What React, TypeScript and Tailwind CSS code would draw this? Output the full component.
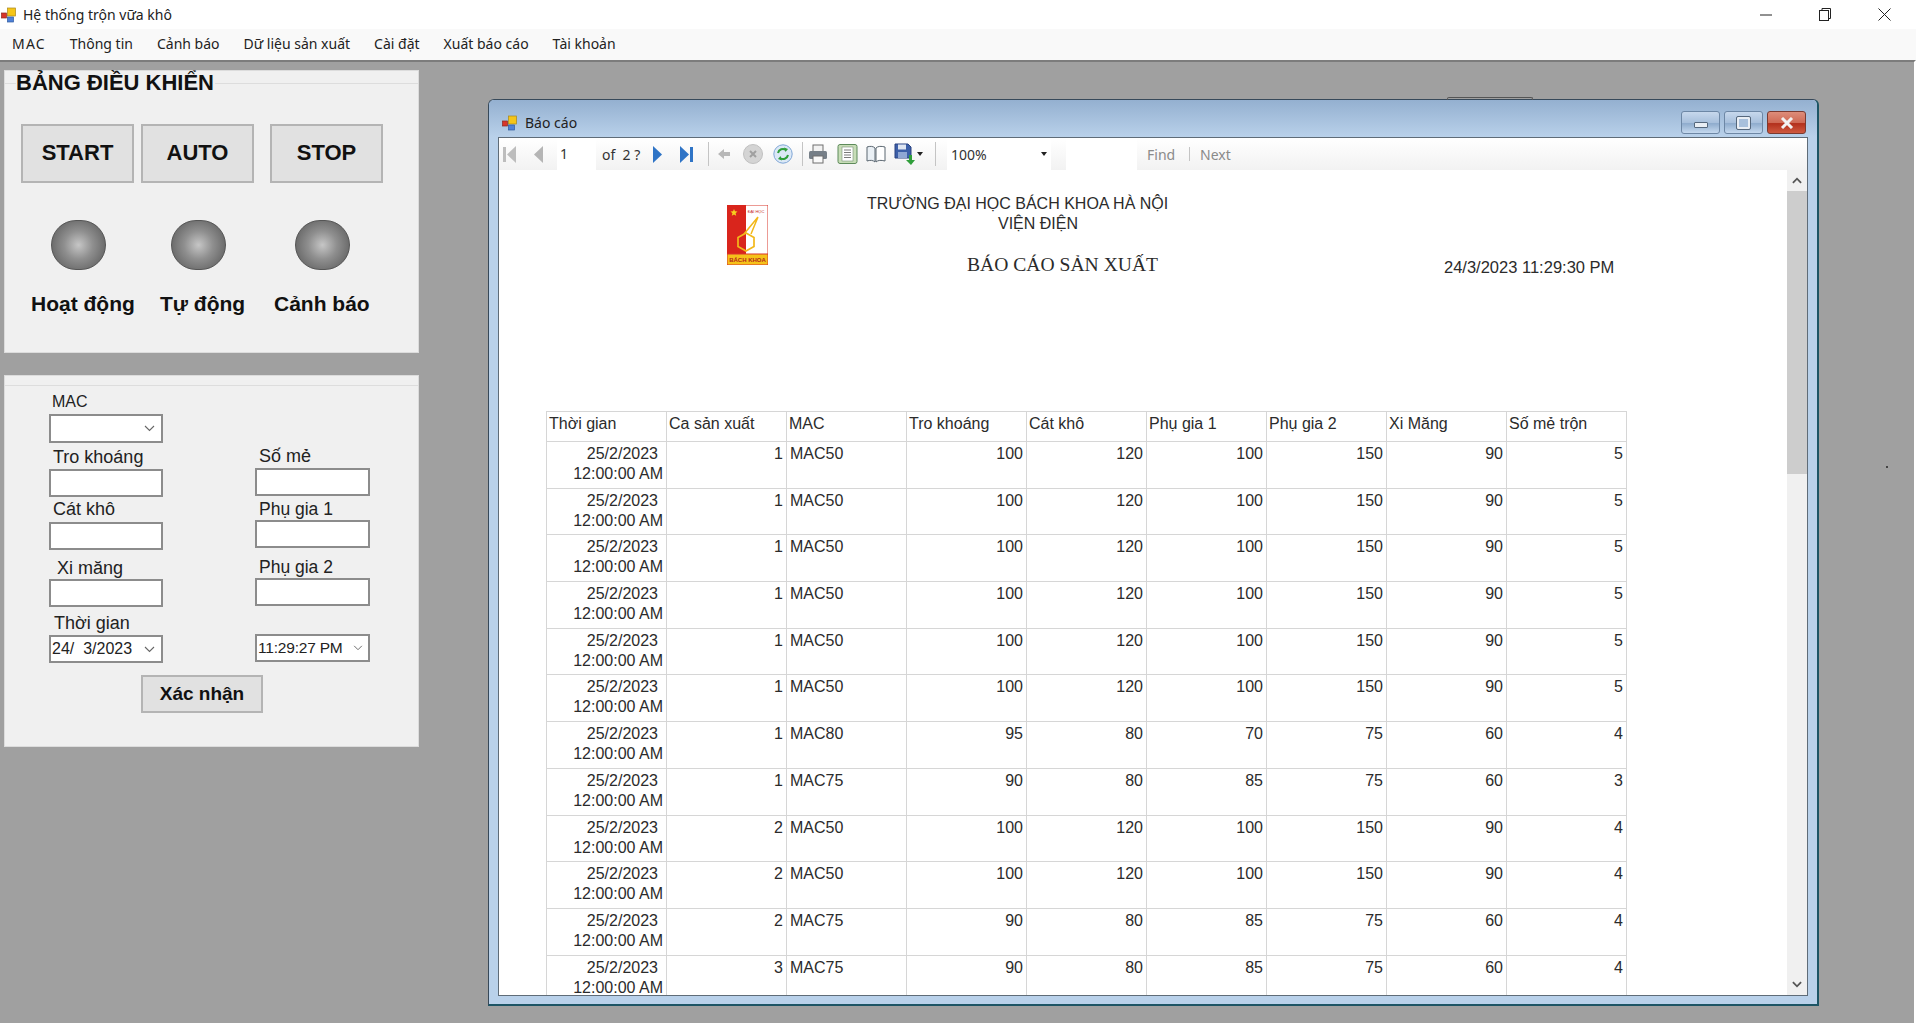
import React from "react";

const rows = [
  ["1", "MAC50", "100", "120", "100", "150", "90", "5"],
  ["1", "MAC50", "100", "120", "100", "150", "90", "5"],
  ["1", "MAC50", "100", "120", "100", "150", "90", "5"],
  ["1", "MAC50", "100", "120", "100", "150", "90", "5"],
  ["1", "MAC50", "100", "120", "100", "150", "90", "5"],
  ["1", "MAC50", "100", "120", "100", "150", "90", "5"],
  ["1", "MAC80", "95", "80", "70", "75", "60", "4"],
  ["1", "MAC75", "90", "80", "85", "75", "60", "3"],
  ["2", "MAC50", "100", "120", "100", "150", "90", "4"],
  ["2", "MAC50", "100", "120", "100", "150", "90", "4"],
  ["2", "MAC75", "90", "80", "85", "75", "60", "4"],
  ["3", "MAC75", "90", "80", "85", "75", "60", "4"],
];

const headers = ["Thời gian", "Ca sản xuất", "MAC", "Tro khoáng", "Cát khô", "Phụ gia 1", "Phụ gia 2", "Xi Măng", "Số mẻ trộn"];
const menus = ["MAC", "Thông tin", "Cảnh báo", "Dữ liệu sản xuất", "Cài đặt", "Xuất báo cáo", "Tài khoản"];

const AppIcon = ({ className }: { className: string }) => (
  <svg viewBox="0 0 16 16" className={className}>
    <rect x="7" y="1" width="8" height="8" fill="#f5c518" stroke="#a8861a" strokeWidth="0.7" />
    <rect x="1" y="6" width="5" height="5" fill="#d8352a" stroke="#8c2a20" strokeWidth="0.7" />
    <rect x="7" y="10" width="6" height="5" fill="#4f81d8" stroke="#2e5a9e" strokeWidth="0.7" />
  </svg>
);

const Chevron = ({ className = "w-[11px] h-[7px]" }: { className?: string }) => (
  <svg viewBox="0 0 11 7" className={className} fill="none" stroke="#666" strokeWidth="1.1">
    <path d="M1 1l4.5 4.5L10 1" />
  </svg>
);

const Led = ({ className }: { className: string }) => (
  <div className={`w-[55px] h-[50px] rounded-full border border-[#555] bg-[radial-gradient(circle,#c6c6c6_0%,#8f8f8f_40%,#6c6c6c_75%)] ${className}`} />
);

const BigButton = ({ label, className }: { label: string; className: string }) => (
  <button className={`w-[113px] h-[59px] pb-[2px] bg-[#e1e1e1] border-2 border-[#b4b4b4] text-[22px] font-bold text-[#111] ${className}`}>
    {label}
  </button>
);

const boxClass = "w-[114px] bg-white border-2 border-[#8c8c8c] block";

const Field = ({ label, className, labelClass, boxH, children }: { label?: string; className: string; labelClass?: string; boxH: string; children?: React.ReactNode }) => (
  <div className={className}>
    {label && <div className={`h-5 leading-5 text-[#222] ${labelClass}`}>{label}</div>}
    <div className={`${boxClass} ${boxH} flex items-center justify-between text-[#222]`}>{children}</div>
  </div>
);

const Sep = ({ className }: { className: string }) => <div className={`w-px h-[24px] bg-[#c4c4c4] ${className}`} />;

const Toolbar = () => (
  <div className="h-8 flex items-center bg-gradient-to-b from-white to-[#f2f2f2] font-['Noto_Sans',sans-serif] text-[14px] text-[#333]">
    <svg viewBox="0 0 13 17" className="w-[13px] h-[17px] ml-[4px]"><rect x="0" y="1" width="3" height="15" fill="#bdbdbd" /><path d="M13 0v17L4 8.5z" fill="#bdbdbd" /></svg>
    <svg viewBox="0 0 9 17" className="w-[9px] h-[17px] ml-[18px]"><path d="M9 0v17L0 8.5z" fill="#b5b5b5" /></svg>
    <div className="w-[39px] h-8 ml-[14px] bg-white pl-[3px] leading-8">1</div>
    <div className="w-[51px] ml-[6px] whitespace-pre">of  2 ?</div>
    <svg viewBox="0 0 9 17" className="w-[9px] h-[17px]"><path d="M0 0v17l9-8.5z" fill="#2f74c6" /></svg>
    <svg viewBox="0 0 13 17" className="w-[13px] h-[17px] ml-[18px]"><path d="M0 0v17l9-8.5z" fill="#2f74c6" /><rect x="10" y="1" width="3" height="15" fill="#2f74c6" /></svg>
    <Sep className="ml-[15px]" />
    <svg viewBox="0 0 12 10" className="w-[12px] h-[10px] ml-[9px]"><path d="M0 5l6-5v3h6v4H6v3z" fill="#b8b8b8" /></svg>
    <svg viewBox="0 0 20 20" className="w-5 h-5 ml-[13px]"><circle cx="10" cy="10" r="9.5" fill="#d4d4d4" stroke="#c0c0c0" /><path d="M7 7l6 6M13 7l-6 6" stroke="#a0a0a0" strokeWidth="2" /></svg>
    <svg viewBox="0 0 20 20" className="w-5 h-5 ml-[10px]" fill="none">
      <circle cx="10" cy="10" r="9.2" fill="#dbe8f6" stroke="#7fa6d6" />
      <path d="M5 9a5 5 0 0 1 8-3" stroke="#2f9e3a" strokeWidth="2" />
      <path d="M11 3.5l4 1.5-2.5 3z" fill="#2f9e3a" />
      <path d="M15 11a5 5 0 0 1-8 3" stroke="#2f9e3a" strokeWidth="2" />
      <path d="M9 16.5l-4-1.5 2.5-3z" fill="#2f9e3a" />
    </svg>
    <Sep className="ml-[9px]" />
    <svg viewBox="0 0 20 20" className="w-5 h-5 ml-[5px]">
      <rect x="5" y="1" width="10" height="7" fill="#f2f2f2" stroke="#6f6f6f" />
      <rect x="1" y="7" width="18" height="8" rx="1.5" fill="#767f88" />
      <rect x="5" y="12" width="10" height="7" fill="#fafafa" stroke="#6f6f6f" />
    </svg>
    <svg viewBox="0 0 21 20" className="w-[21px] h-5 ml-[9px]">
      <rect x="1" y="0.5" width="19" height="19" rx="2" fill="#c7ddb7" stroke="#5d8a5a" />
      <rect x="5" y="3" width="11" height="14" fill="#fff" stroke="#7b8f7b" strokeWidth="0.6" />
      <path d="M7 6h7M7 8.5h7M7 11h7M7 13.5h7" stroke="#6b6b6b" strokeWidth="0.9" />
    </svg>
    <svg viewBox="0 0 22 20" className="w-[22px] h-5 ml-[7px]" fill="#fff" stroke="#5a6670">
      <path d="M2 3c3-1 6-1 8 1v14c-2-2-5-2-8-1z" fill="#eaf0f5" />
      <path d="M11 4c2-2 5-2 9-1v14c-4-1-7-1-9 1z" />
    </svg>
    <svg viewBox="0 0 21 22" className="w-[21px] h-[22px] ml-[7px]">
      <path d="M1 1h13l3 3v11H1z" fill="#3c5fa8" stroke="#2a4380" />
      <rect x="4" y="1.5" width="8" height="5" fill="#dfe6f2" />
      <rect x="4" y="9" width="9" height="6" fill="#8fa7d4" />
      <path d="M15 12v5h-3l5 5 4-5h-3v-5z" fill="#2f9e3a" />
    </svg>
    <svg viewBox="0 0 6 4" className="w-[6px] h-1 ml-[2px]"><path d="M0 0h6L3 4z" fill="#222" /></svg>
    <Sep className="ml-[12px]" />
    <div className="w-[104px] h-8 ml-[11px] bg-white flex items-center justify-between pl-[4px] pr-[4px]">
      <span>100%</span>
      <svg viewBox="0 0 6 4" className="w-[6px] h-1"><path d="M0 0h6L3 4z" fill="#222" /></svg>
    </div>
    <div className="w-[71px] h-8 ml-[15px] bg-white" />
    <span className="ml-[10px] w-[29px] text-[#8a8a8a]">Find</span>
    <div className="w-px h-[14px] bg-[#c4c4c4] ml-[13px]" />
    <span className="ml-[10px] text-[#8a8a8a]">Next</span>
  </div>
);

const Logo = () => (
  <svg viewBox="0 0 41 60" className="w-[41px] h-[60px] ml-[228px] mt-[35px] shrink-0">
    <rect x="0" y="0" width="41" height="60" fill="#fff" stroke="#d9362a" />
    <rect x="0" y="0" width="19" height="49" fill="#d9251c" />
    <rect x="0" y="49" width="41" height="11" fill="#f5c21a" stroke="#d9362a" />
    <path d="M7 4l1 2.3 2.5.2-1.9 1.7.6 2.5L7 9.4l-2.2 1.3.6-2.5-1.9-1.7L6 6.300z" fill="#f7d11e" />
    <text x="29" y="8" fontSize="4" textAnchor="middle" fill="#c4261d" fontFamily="Liberation Sans">ĐẠI HỌC</text>
    <path d="M31 12L17 29M31 12L24 29" stroke="#f2b81a" strokeWidth="1.5" fill="none" />
    <path d="M19 28l8 4.500v9L19 46l-8-4.500v-9z" stroke="#f2b81a" strokeWidth="1.700" fill="none" />
    <text x="20.5" y="57" fontSize="6" fontWeight="bold" textAnchor="middle" fill="#b3261b" fontFamily="Liberation Sans">BÁCH KHOA</text>
  </svg>
);

const cellClass = "w-[120px] shrink-0 border-r border-b border-[#d6d6d6] px-[3px]";

const Report = () => (
  <div className="flex-1 bg-white overflow-hidden text-[16px] text-[#2b2b2b]">
    <div className="h-[241px] flex items-start">
      <Logo />
      <div className="ml-[99px] mt-[24px] w-[305px] shrink-0 text-[16px] leading-5 whitespace-nowrap">
        <div>TRƯỜNG ĐẠI HỌC BÁCH KHOA HÀ NỘI</div>
        <div className="ml-[131px]">VIỆN ĐIỆN</div>
        <div className="ml-[100px] mt-[19px] font-['Liberation_Serif',serif] text-[19.6px] leading-6">BÁO CÁO SẢN XUẤT</div>
      </div>
      <div className="ml-[272px] mt-[87px] text-[16.5px] leading-5 whitespace-nowrap">24/3/2023 11:29:30 PM</div>
    </div>
    <div className="ml-[47px] w-[1081px] border-l border-t border-[#d6d6d6]">
      <div className="flex h-[30px]">
        {headers.map((h) => (
          <div key={h} className="w-[120px] shrink-0 border-r border-b border-[#d6d6d6] pl-[2px] leading-[24px]">{h}</div>
        ))}
      </div>
      {rows.map((row, i) => (
        <div key={i} className="flex h-[46.7px] leading-5">
          <div className={`${cellClass} pt-[2px] text-right`}>
            <div className="mr-[5px]">25/2/2023</div>
            <div>12:00:00 AM</div>
          </div>
          {row.map((v, j) => (
            <div key={j} className={`${cellClass} pt-[2px] ${j === 1 ? "text-left" : "text-right"}`}>{v}</div>
          ))}
        </div>
      ))}
    </div>
  </div>
);

const ScrollBar = () => (
  <div className="w-5 bg-[#f0f0f0] flex flex-col shrink-0">
    <div className="h-[21px] flex items-center justify-center">
      <svg viewBox="0 0 11 7" className="w-[10px] h-[7px]" fill="none" stroke="#555" strokeWidth="2"><path d="M1 6l4.5-4.5L10 6" /></svg>
    </div>
    <div className="h-[283px] bg-[#cdcdcd]" />
    <div className="flex-1" />
    <div className="h-[21px] flex items-center justify-center">
      <svg viewBox="0 0 11 7" className="w-[10px] h-[7px]" fill="none" stroke="#555" strokeWidth="2"><path d="M1 1l4.5 4.5L10 1" /></svg>
    </div>
  </div>
);

const captionClass = "h-[23px] w-[39px] rounded-[3px] border border-[#6d87a5] flex items-center justify-center";

const ReportWindow = () => (
  <div className="w-[1331px] h-[907px] ml-[69px] mt-[37px] shrink-0 rounded-t-[6px] border border-[#37495a] border-r-2 border-b-2 border-r-[#1d5565] border-b-[#1d5565] bg-[#b9d1ea] flex flex-col px-[9px] pb-[8px]">
    <div className="h-[37px] -mx-[9px] pl-[12px] pr-[12px] pt-[8px] rounded-t-[5px] bg-gradient-to-b from-[#94b0d0] to-[#b9d1ea] flex items-center shrink-0">
      <AppIcon className="w-[17px] h-[16px]" />
      <span className="ml-[7px] font-['Noto_Sans',sans-serif] text-[14px] text-[#222]">Báo cáo</span>
      <div className="ml-auto mr-[-1px] flex gap-[4px]">
        <div className={`${captionClass} bg-[linear-gradient(#c7d8ec_0%,#a8c0dc_50%,#8faccd_55%,#c5d9ef_100%)]`}>
          <div className="w-[14px] h-[6px] mt-[5px] bg-[#e9eef4] border border-[#55677c] rounded-[1px]" />
        </div>
        <div className={`${captionClass} bg-[linear-gradient(#c7d8ec_0%,#a8c0dc_50%,#8faccd_55%,#c5d9ef_100%)]`}>
          <div className="w-[13px] h-[12px] border-2 border-[#e9eef4] outline outline-1 outline-[#55677c] rounded-[1px] bg-[#a8c0dc]" />
        </div>
        <div className={`${captionClass} border-[#7a3a30] bg-[linear-gradient(#dd8d7a_0%,#cf6a55_50%,#b3301c_55%,#cf5a40_100%)]`}>
          <svg viewBox="0 0 14 12" className="w-[14px] h-[12px]"><path d="M2 1l10 10M12 1L2 11" stroke="#f2f2f2" strokeWidth="3" /></svg>
        </div>
      </div>
    </div>
    <div className="flex-1 min-h-0 flex flex-col border-t border-l border-r border-b border-[#5f6c78] bg-white">
      <Toolbar />
      <div className="flex-1 min-h-0 flex">
        <Report />
        <ScrollBar />
      </div>
    </div>
  </div>
);

const ControlPanel = () => (
  <div className="w-[415px] h-[283px] bg-[#f0f0f0] border border-[#dcdcdc] shrink-0">
    <div className="h-[24px] flex items-center">
      <div className="w-[11px] h-px bg-[#dddddd]" />
      <span className="text-[22px] font-bold text-[#111] leading-[24px]">BẢNG ĐIỀU KHIỂN</span>
      <div className="flex-1 h-px bg-[#dddddd] ml-[1px]" />
    </div>
    <div className="flex mt-[29px] pl-[16px]">
      <BigButton label="START" className="" />
      <BigButton label="AUTO" className="ml-[7px]" />
      <BigButton label="STOP" className="ml-[16px]" />
    </div>
    <div className="flex mt-[37px] pl-[46px]">
      <Led className="" />
      <Led className="ml-[65px]" />
      <Led className="ml-[69px]" />
    </div>
    <div className="flex mt-[22px] text-[21px] font-bold text-[#111] leading-6 whitespace-nowrap">
      <span className="ml-[26px] w-[129px]">Hoạt động</span>
      <span className="w-[114px]">Tự động</span>
      <span>Cảnh báo</span>
    </div>
  </div>
);

const FormPanel = () => (
  <div className="w-[415px] h-[372px] mt-[22px] bg-[#f0f0f0] border border-[#dcdcdc] shrink-0">
    <div className="h-[10px] border-b border-[#dddddd]" />
    <div className="flex pl-[44px]">
      <div className="w-[114px]">
        <Field label="MAC" className="mt-[6px]" labelClass="text-[16px] pl-[3px] mb-[2px]" boxH="h-[29px]">
          <span />
          <Chevron className="w-[11px] h-[7px] mr-[6px]" />
        </Field>
        <Field label="Tro khoáng" className="mt-[4px]" labelClass="text-[18px] pl-[4px] mb-[2px]" boxH="h-[28px]" />
        <Field label="Cát khô" className="mt-[2px]" labelClass="text-[18px] pl-[4px] mb-[3px]" boxH="h-[28px]" />
        <Field label="Xi măng" className="mt-[8px]" labelClass="text-[18px] pl-[8px] mb-[1px]" boxH="h-[28px]" />
        <Field label="Thời gian" className="mt-[6px]" labelClass="text-[18px] pl-[5px] mb-[2px]" boxH="h-[28px]">
          <span className="pl-[1px] text-[16px] leading-none whitespace-pre">24/  3/2023</span>
          <Chevron className="w-[11px] h-[7px] mr-[6px]" />
        </Field>
      </div>
      <div className="w-[115px] ml-[92px]">
        <Field label="Số mẻ" className="mt-[60px]" labelClass="text-[18px] pl-[4px] mb-[2px]" boxH="h-[28px] w-[115px]" />
        <Field label="Phụ gia 1" className="mt-[3px]" labelClass="text-[17.5px] pl-[4px] mb-[1px]" boxH="h-[28px] w-[115px]" />
        <Field label="Phụ gia 2" className="mt-[9px]" labelClass="text-[17.5px] pl-[4px] mb-[1px]" boxH="h-[28px] w-[115px]" />
        <Field className="mt-[28px]" boxH="h-[28px] w-[115px]">
          <span className="pl-[1px] text-[15.5px] leading-none whitespace-nowrap tracking-[-0.2px]">11:29:27 PM</span>
          <Chevron className="w-[10px] h-[6px] mr-[5px]" />
        </Field>
      </div>
    </div>
    <button className="block w-[122px] h-[38px] ml-[136px] mt-[12px] bg-[#e1e1e1] border-2 border-[#b4b4b4] text-[19px] font-bold text-[#111]">
      Xác nhận
    </button>
  </div>
);

export default function App() {
  return (
    <div className="w-[1916px] h-[1023px] flex flex-col overflow-hidden bg-white font-['Liberation_Sans',sans-serif]">
      <div className="h-[29px] shrink-0 flex items-center bg-white">
        <AppIcon className="w-[17px] h-[16px]" />
        <span className="ml-[6px] font-['Noto_Sans',sans-serif] text-[14px] text-[#222]">Hệ thống trộn vữa khô</span>
        <div className="ml-auto flex items-center">
          <svg viewBox="0 0 12 2" className="w-3 h-[2px]"><path d="M0 1h12" stroke="#222" /></svg>
          <svg viewBox="0 0 12 13" className="w-3 h-[13px] ml-[47px]" fill="none" stroke="#222"><rect x="0.5" y="2.5" width="9" height="10" /><path d="M3 2.5V.5h8.5v10h-2" /></svg>
          <svg viewBox="0 0 13 13" className="w-[13px] h-[13px] ml-[47px] mr-[25px]" stroke="#222"><path d="M.5.5l12 12M12.5.5l-12 12" /></svg>
        </div>
      </div>
      <div className="h-[31px] shrink-0 pb-[2px] flex items-center bg-[#f9f9f9] font-['Noto_Sans',sans-serif] text-[14px] text-[#222]">
        {menus.map((m, i) => (
          <span key={m} className={`px-3 whitespace-nowrap ${i === 0 ? "tracking-[1.2px]" : ""}`}>{m}</span>
        ))}
      </div>
      <div className="relative flex-1 min-h-0 flex items-start bg-[#a0a0a0] border-t-2 border-t-[#7c7c7c] border-r-2 border-r-white">
        <div className="flex flex-col w-[419px] pl-1 pt-2 shrink-0">
          <ControlPanel />
          <FormPanel />
        </div>
        <ReportWindow />
        <div className="absolute left-[1447px] top-[35px] w-[86px] h-[3px] rounded-t-[2px] border border-b-0 border-[#555]" />
        <div className="absolute left-[1886px] top-[404px] w-[2px] h-[2px] bg-[#444]" />
      </div>
    </div>
  );
}
